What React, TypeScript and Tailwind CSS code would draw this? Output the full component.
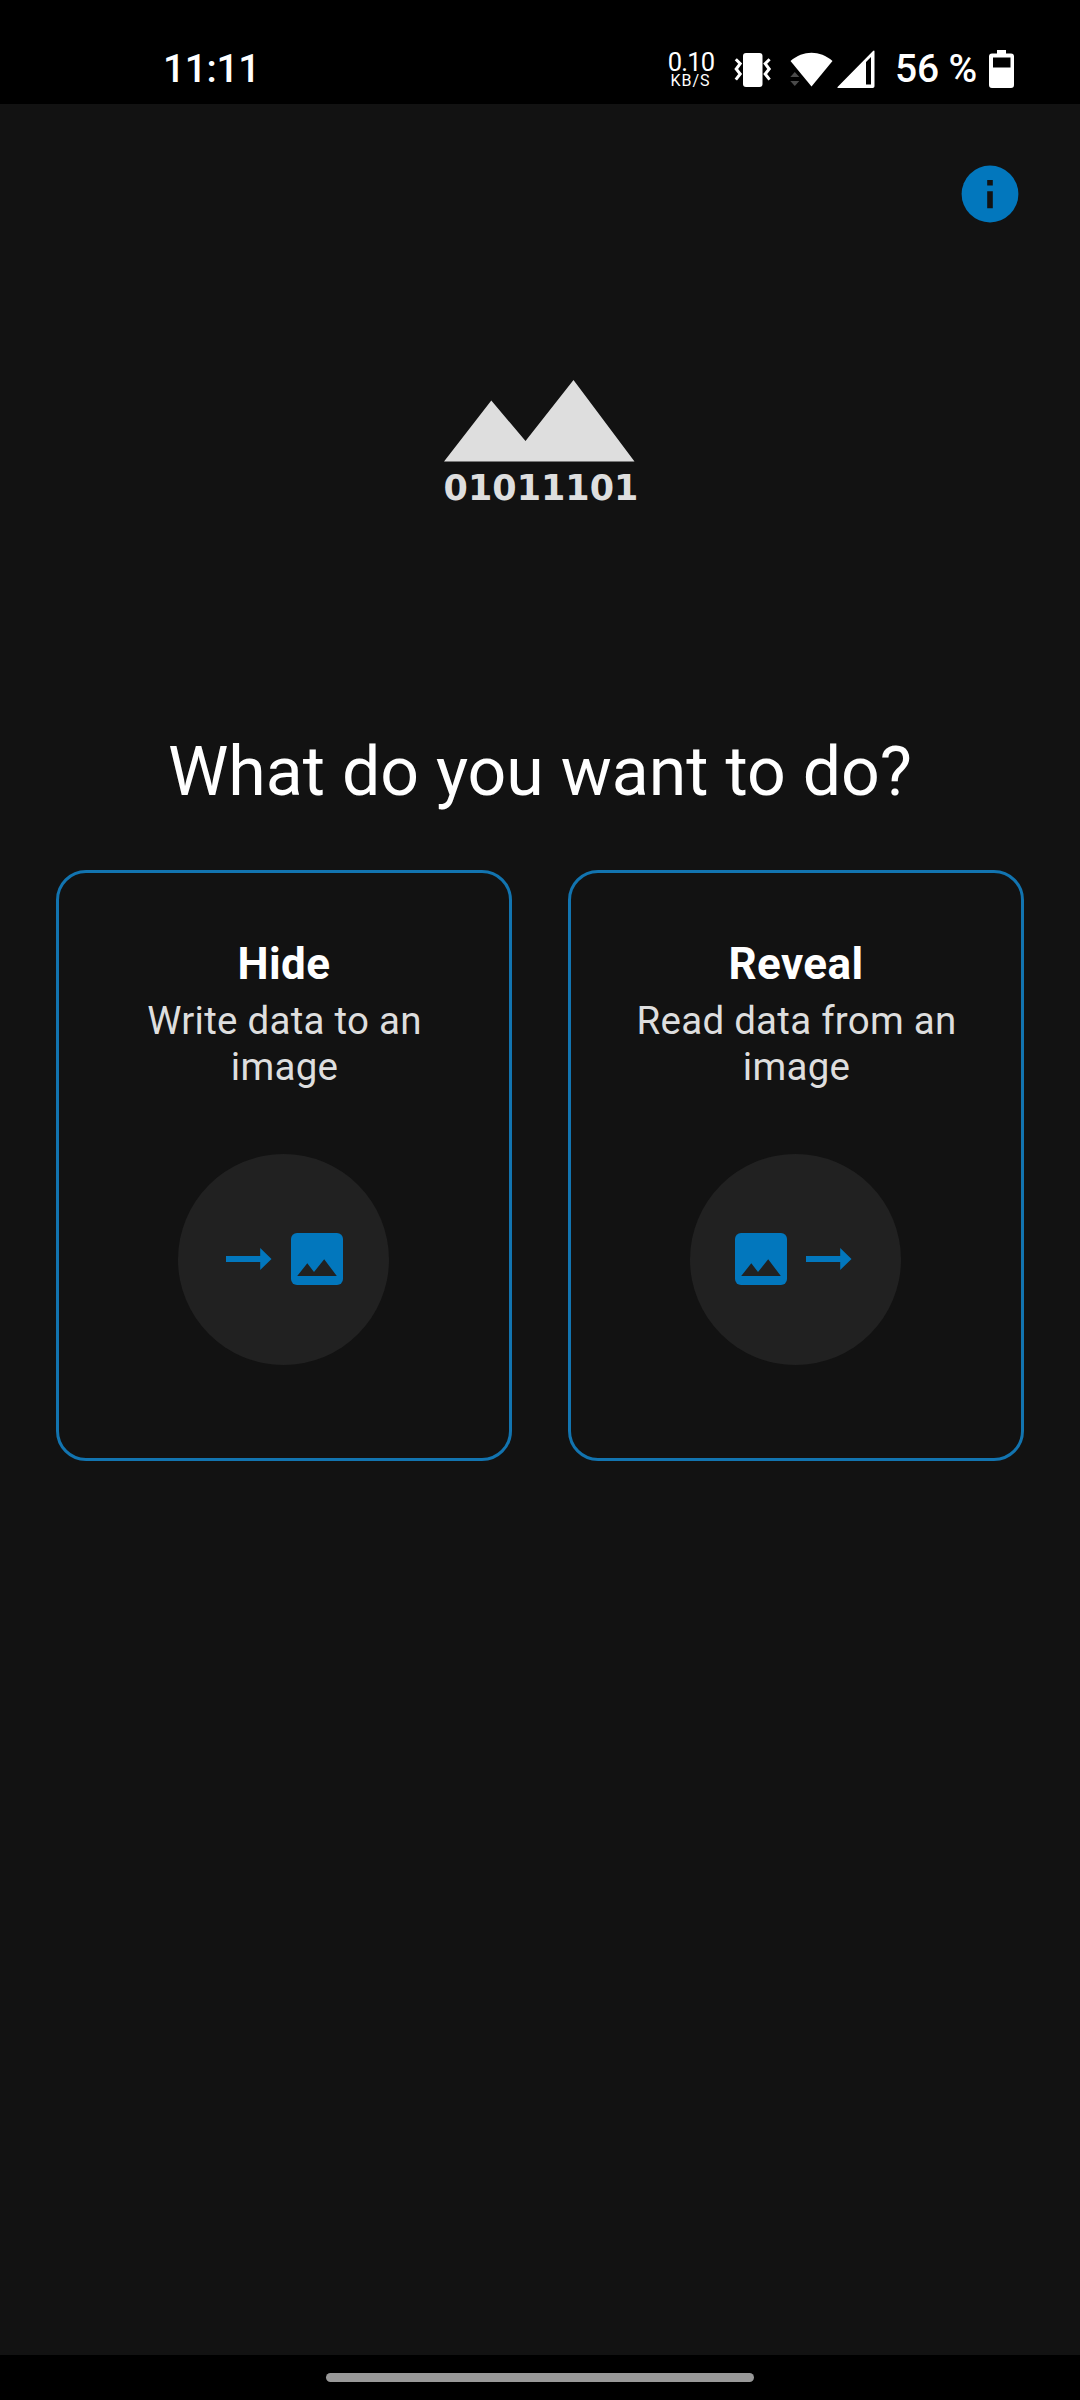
import type { ReactNode } from "react";

function VibrateIcon() {
  return (
    <svg width="38" height="36" viewBox="0 0 38 36" fill="none">
      <rect x="9" y="1" width="19.5" height="34" rx="3" fill="#fff" />
      <path d="M1.2 6.2 5.6 10.6 1.6 16 5.6 21 1.2 26.6" transform="translate(.6 1)" stroke="#fff" strokeWidth="3" />
      <path d="M36.4 6.2 32 10.6 36 16 32 21 36.4 26.6" transform="translate(-.8 1)" stroke="#fff" strokeWidth="3" />
    </svg>
  );
}

function WifiIcon() {
  return (
    <svg width="44" height="36" viewBox="0 0 44 36">
      <path d="M0.5 10C13-1 30-1 42.5 10L21.5 35.5Z" fill="#fff" />
      <path d="M4.8 21 9.3 26H.3ZM4.8 35 .3 30H9.3Z" fill="#4a4a4a" />
    </svg>
  );
}

function SignalIcon() {
  return (
    <svg width="38" height="39" viewBox="0 0 38 39">
      <path
        fillRule="evenodd"
        d="M37.5 1.5V36.2Q37.5 38 35.7 38H1.3Q-.5 38 .8 36.7L36 .9Q37.5-.3 37.5 1.5ZM29 12V34.5H34V7Z"
        fill="#fff"
      />
    </svg>
  );
}

function BatteryIcon() {
  return (
    <svg width="25" height="38" viewBox="0 0 25 38">
      <path
        fillRule="evenodd"
        d="M8 0H17V3.5H22Q25 3.5 25 6.5V35Q25 38 22 38H3Q0 38 0 35V6.5Q0 3.5 3 3.5H8ZM4 7.5V17.5H21.5V7.5Z"
        fill="#fff"
      />
    </svg>
  );
}

function InfoIcon() {
  return (
    <svg width="58" height="58" viewBox="0 0 58 58">
      <circle cx="29" cy="29" r="28.4" fill="#0277bd" />
      <path d="M26.2 15H31.8V20.6H26.2ZM26.2 26.3H31.8V43.2H26.2Z" fill="#121212" />
    </svg>
  );
}

function MountainLogo() {
  return (
    <svg width="192" height="82" viewBox="0 0 192 82">
      <path d="M0 81.5 47.3 20.5 81.5 61 129.5 0 190.5 81.5Z" fill="#dedede" />
    </svg>
  );
}

function ArrowIcon() {
  return (
    <svg className="shrink-0" width="46" height="22" viewBox="0 0 46 22">
      <path d="M0 8H34.2V0L45.5 11 34.2 22V14H0Z" fill="#0277bd" />
    </svg>
  );
}

function PictureIcon() {
  return (
    <svg className="shrink-0" width="52" height="52" viewBox="0 0 52 52">
      <rect width="52" height="52" rx="6" fill="#0277bd" />
      <path d="M6.2 43 16.3 30.3 23 39 33.2 26.2 45.8 43Z" fill="#212121" />
    </svg>
  );
}

function ActionCard({ title, lines, children }: { title: string; lines: string[]; children: ReactNode }) {
  return (
    <button className="flex h-[591px] w-[456px] flex-col items-center rounded-[30px] border-[3px] border-[#1274b0] pt-[65px]">
      <span className="text-[44px] leading-[52px] font-bold tracking-[0.4px] text-white">{title}</span>
      <span className="mt-[8px] ml-[1px] flex flex-col text-[38.5px] leading-[46px] tracking-[0.25px] text-[#dedede]">
        {lines.map((line) => (
          <span key={line}>{line}</span>
        ))}
      </span>
      {children}
    </button>
  );
}

export default function App() {
  return (
    <div className="flex h-[2400px] w-[1080px] flex-col bg-[#121212] font-[Roboto,sans-serif]">
      <header className="flex h-[104px] items-start bg-black text-white">
        <span className="mt-[46px] ml-[163px] text-[39px] leading-[46px] font-medium tracking-[-0.4px]">11:11</span>
        <div className="mt-[51px] ml-auto flex w-[48px] flex-col items-center">
          <span className="mr-[2px] text-[25.5px] leading-[22px] tracking-[-0.8px]">0.10</span>
          <span className="mr-[3px] text-[16px] leading-[16px] tracking-[1px]">KB/S</span>
        </div>
        <div className="mt-[52px] mr-[1px] ml-[18px]"><VibrateIcon /></div>
        <div className="mt-[51px] ml-[17px]"><WifiIcon /></div>
        <div className="mt-[50px] ml-[3px]"><SignalIcon /></div>
        <span className="mt-[46px] ml-[20px] w-[84px] text-[39px] leading-[46px] font-medium tracking-[-0.2px] whitespace-nowrap">56 %</span>
        <div className="mt-[50px] mr-[66px] ml-[10px]"><BatteryIcon /></div>
      </header>

      <main className="flex flex-1 flex-col items-center">
        <div className="mt-[61px] mr-[61px] self-end"><InfoIcon /></div>
        <div className="mt-[157px] ml-[2px] flex flex-col items-start">
          <MountainLogo />
          <span className="mt-[6px] font-['DejaVu_Sans'] text-[35px] leading-[40px] font-bold text-[#dedede]">01011101</span>
        </div>
        <h1 className="mt-[224px] text-[68px] leading-[80px] text-white">What do you want to do?</h1>
        <div className="mt-[58px] flex gap-[56px]">
          <ActionCard title="Hide" lines={["Write data to an", "image"]}>
            <span className="mt-[64px] mr-[1px] flex size-[211px] items-center gap-[19px] rounded-full bg-[#212121] pb-[2px] pl-[48px]">
              <ArrowIcon />
              <PictureIcon />
            </span>
          </ActionCard>
          <ActionCard title="Reveal" lines={["Read data from an", "image"]}>
            <span className="mt-[64px] mr-[1px] flex size-[211px] items-center gap-[19px] rounded-full bg-[#212121] pb-[2px] pl-[45px]">
              <PictureIcon />
              <ArrowIcon />
            </span>
          </ActionCard>
        </div>
      </main>

      <footer className="flex h-[45px] justify-center bg-black pt-[18px]">
        <div className="h-[9px] w-[428px] rounded-full bg-[#999]" />
      </footer>
    </div>
  );
}
